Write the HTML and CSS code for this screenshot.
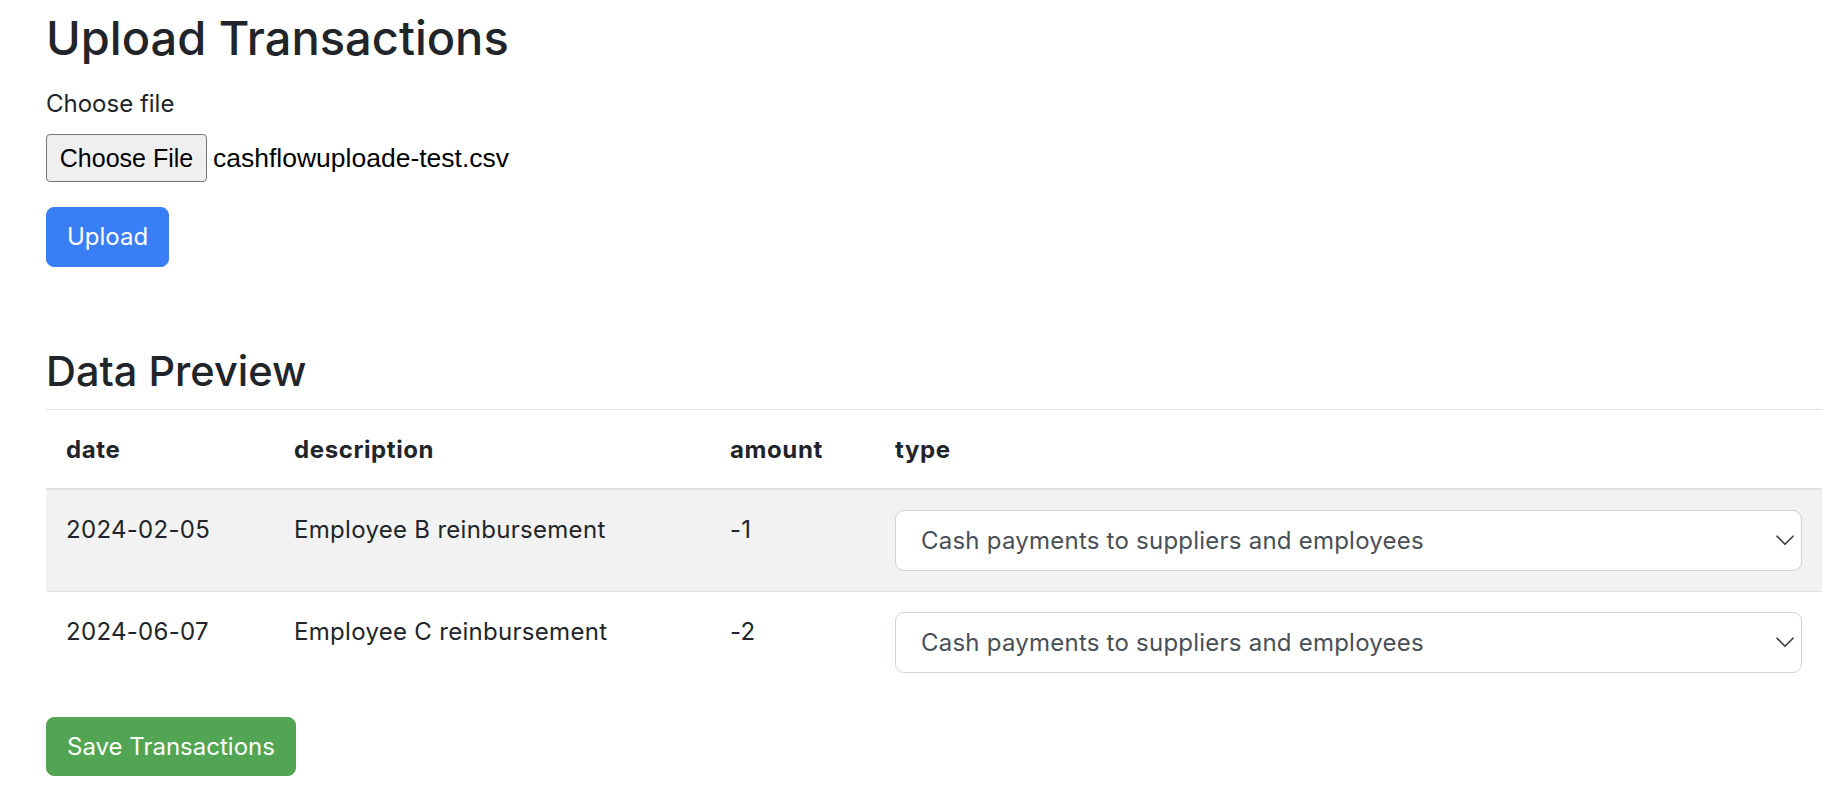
FILE: index.html
```html
<!DOCTYPE html>
<html lang="en">
<head>
<meta charset="utf-8">
<title>Upload Transactions</title>
<link rel="stylesheet" href="styles.css">
</head>
<body>
<main class="page">
  <h1 class="title">Upload Transactions</h1>
  <form class="upload-form">
    <div class="field">
      <label class="field-label">Choose file</label>
      <div class="file-input">
        <span class="file-btn">Choose File</span>
        <span class="file-name">cashflowuploade-test.csv</span>
      </div>
    </div>
    <button type="button" class="btn btn-primary">Upload</button>
  </form>

  <h2 class="section-title">Data Preview</h2>
  <table class="table">
    <colgroup>
      <col class="col-date">
      <col class="col-desc">
      <col class="col-amount">
      <col class="col-type">
    </colgroup>
    <thead>
      <tr><th>date</th><th>description</th><th>amount</th><th>type</th></tr>
    </thead>
    <tbody>
      <tr class="striped">
        <td>2024-02-05</td>
        <td>Employee B reinbursement</td>
        <td>-1</td>
        <td class="select-cell">
          <div class="select-wrap">
            <select class="form-select">
              <option>Cash payments to suppliers and employees</option>
            </select>
            <svg class="chevron" width="18" height="11" viewBox="0 0 18 11"><path d="M1 1.2 L9 9.2 L17 1.2" fill="none" stroke="#343a40" stroke-width="1.6" stroke-linecap="round" stroke-linejoin="round"/></svg>
          </div>
        </td>
      </tr>
      <tr>
        <td>2024-06-07</td>
        <td>Employee C reinbursement</td>
        <td>-2</td>
        <td class="select-cell">
          <div class="select-wrap">
            <select class="form-select">
              <option>Cash payments to suppliers and employees</option>
            </select>
            <svg class="chevron" width="18" height="11" viewBox="0 0 18 11"><path d="M1 1.2 L9 9.2 L17 1.2" fill="none" stroke="#343a40" stroke-width="1.6" stroke-linecap="round" stroke-linejoin="round"/></svg>
          </div>
        </td>
      </tr>
    </tbody>
  </table>
  <button type="button" class="btn btn-success">Save Transactions</button>
</main>
</body>
</html>
```

FILE: styles.css
```css
html, body {
  margin: 0;
  padding: 0;
  background: #ffffff;
}

body {
  font-family: Inter, "Noto Sans", "Liberation Sans", sans-serif;
  font-size: 24px;
  line-height: 1.5;
  color: #212529;
}

.page {
  padding: 0 22px 0 46px;
}

.title {
  margin: 10px 0 20px;
  font-size: 47px;
  font-weight: 500;
  line-height: 1.2;
}

.upload-form {
  display: flex;
  flex-direction: column;
  align-items: flex-start;
}

.field {
  display: flex;
  flex-direction: column;
  align-items: flex-start;
  gap: 12px;
}

.field-label {
  display: block;
}

.file-input {
  display: flex;
  align-items: center;
  gap: 6px;
  font-family: "Liberation Sans", Arial, sans-serif;
  color: #000;
}

.file-btn {
  display: block;
  box-sizing: border-box;
  height: 48px;
  width: 161px;
  line-height: 46px;
  text-align: center;
  font-size: 25px;
  background: #efefef;
  border: 1px solid #767676;
  border-radius: 4px;
}

.file-name {
  font-size: 26.5px;
}

.btn {
  display: inline-block;
  box-sizing: border-box;
  font-family: inherit;
  font-size: 24px;
  line-height: 36px;
  font-weight: 400;
  color: #fff;
  border: 1px solid transparent;
  border-radius: 8px;
  cursor: pointer;
}

.btn-primary {
  margin-top: 25px;
  height: 60px;
  padding: 11px 20px;
  background: #3a7ef6;
  border-color: #3a7ef6;
}

.btn-success {
  margin-top: 24px;
  height: 59px;
  padding: 11px 20px;
  background: #52a552;
  border-color: #52a552;
}

.section-title {
  margin: 80px 0 12px;
  font-size: 41.5px;
  font-weight: 500;
  line-height: 1.2;
}

.table {
  width: 100%;
  border-collapse: collapse;
  color: #212529;
}

.col-date { width: 228px; }
.col-desc { width: 436px; }
.col-amount { width: 165px; }

.table th,
.table td {
  padding: 20px;
  text-align: left;
  vertical-align: top;
  border-top: 1px solid #dee2e6;
}

.table th {
  padding-top: 22px;
  padding-bottom: 20px;
  font-weight: 700;
  letter-spacing: 0.6px;
  border-bottom: 2px solid #dee2e6;
}

.table td {
  padding-top: 22px;
  letter-spacing: 0.3px;
}

.table td.select-cell {
  padding-top: 20px;
  letter-spacing: 0;
}

.table tbody tr:first-child td {
  border-top: 0;
}

.table tr.striped {
  background: #f2f2f2;
}

.select-wrap {
  position: relative;
}

.form-select {
  display: block;
  box-sizing: border-box;
  width: 100%;
  height: 61px;
  padding: 0 50px 0 25px;
  font-family: inherit;
  font-size: 24px;
  letter-spacing: 0.23px;
  color: #495057;
  background: #fff;
  border: 1px solid #ced4da;
  border-radius: 9px;
  appearance: none;
  -webkit-appearance: none;
}

.chevron {
  position: absolute;
  right: 8px;
  top: 25px;
  pointer-events: none;
}
```
